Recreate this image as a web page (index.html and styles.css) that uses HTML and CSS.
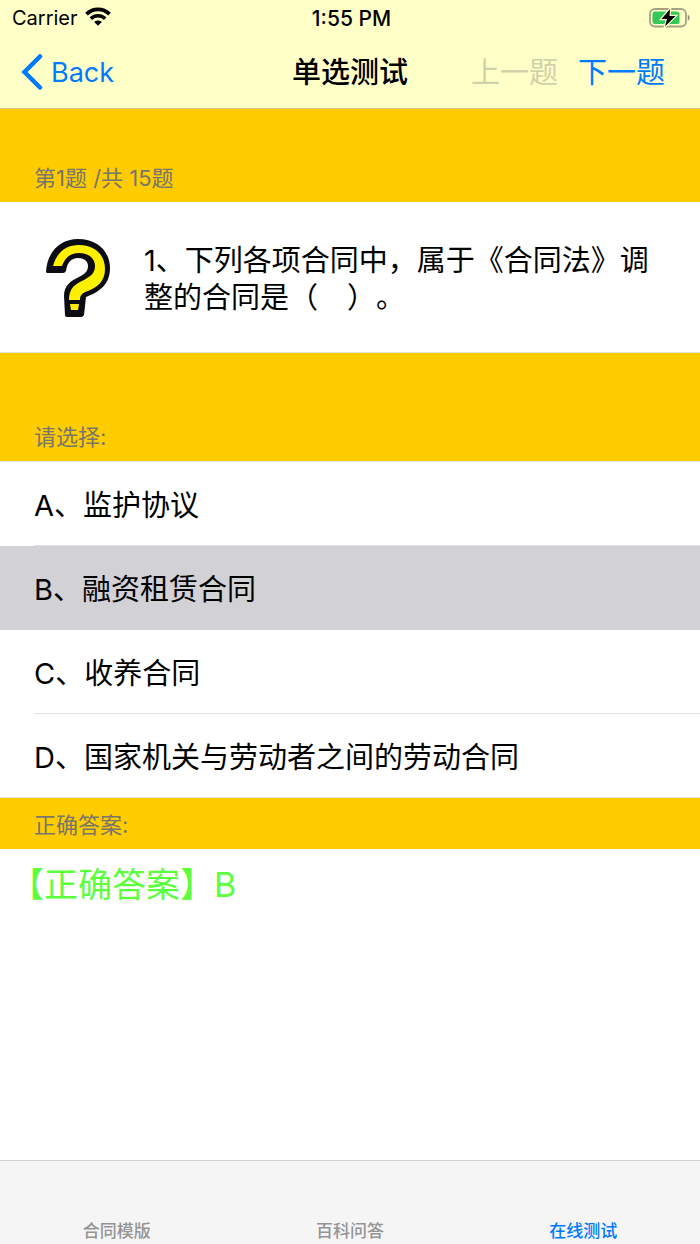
FILE: index.html
```
<!DOCTYPE html>
<html lang="zh-CN">
<head>
    <meta charset="UTF-8">
    <meta name="viewport" content="width=device-width, initial-scale=1">
    <title>单选测试</title>
    <link rel="stylesheet" href="styles.css">
</head>
<body>
<header class="header">
    <div class="status">
        <div class="status_left">
            <span>Carrier</span>
            <svg class="wifi" viewBox="0 0 26 19" aria-hidden="true">
                <path d="M1.500 7.200C8 .8 18 .8 24.500 7.200" fill="none" stroke="#000" stroke-width="3.800"/>
                <path d="M5.800 11.600C10 7.700 16 7.700 20.200 11.600" fill="none" stroke="#000" stroke-width="3.600"/>
                <path d="M13 18.800L9.200 15C11.400 13 14.600 13 16.800 15Z"/>
            </svg>
        </div>
        <span class="time">1:55 PM</span>
        <svg class="battery" viewBox="0 0 42 20" aria-hidden="true">
            <rect x="1" y="1" width="36" height="17.500" rx="5" fill="none" stroke="#a3a383" stroke-width="1.800"/>
            <path d="M38.800 6.700C41.200 7.700 41.200 11.800 38.800 12.800Z" fill="#8f8f73"/>
            <rect x="3.500" y="3.500" width="27" height="12.500" rx="2.500" fill="#34c759"/>
            <path d="M21 1L12.500 11H18L16 18.500L26.500 8H20.500Z" fill="#000" stroke="#ffffc8" stroke-width="2.400" paint-order="stroke"/>
        </svg>
    </div>
    <nav class="nav">
        <a class="back" href="#">
            <svg class="back_icon" viewBox="0 0 22 36" aria-hidden="true">
                <path d="M19 2.500L3.500 18L19 33.500" fill="none" stroke="#007aff" stroke-width="4.500" stroke-linecap="round"/>
            </svg>
            <span>Back</span>
        </a>
        <h1 class="title">单选测试</h1>
        <div class="nav_right">
            <button type="button" disabled>上一题</button>
            <button type="button">下一题</button>
        </div>
    </nav>
</header>

<main class="main">
    <h2 class="section section_first">第1题 /共 15题</h2>
    <div class="question">
        <svg class="question_icon" viewBox="0 0 68 80" aria-hidden="true">
            <path d="M1 34C2 14 15 1 33 1C53 1 65 14 65 30C65 47 54 54 41 59L39 77Q38 79 36 79H22Q20 79 20 77L19 58C19 47 26 43 34 39C40 36 43 33 43 28C43 23 39 20 33 20C26 20 22 25 21 33Q20 35 18 35H3Q1 35 1 34Z" fill="#0c0c14"/>
            <path d="M8 28C12 14 21 7 34 7C50 7 60 17 60 31C60 44 52 49 43 53C37 55 35 57 35 62H24C24 50 30 46 39 42C46 38 50 35 50 28C50 20 43 15 34 15C25 15 20 20 17 28Z" fill="#fff000"/>
            <path d="M25 66H34L33 72H26Z" fill="#ffe800"/>
        </svg>
        <p class="question_text">1、下列各项合同中，属于《合同法》调整的合同是（　）。</p>
    </div>

    <h2 class="section section_choose" id="choose">请选择:</h2>
    <div class="options" role="radiogroup" aria-labelledby="choose">
        <label class="option"><input type="radio" name="answer" value="A"><span>A、监护协议</span></label>
        <label class="option"><input type="radio" name="answer" value="B" checked><span>B、融资租赁合同</span></label>
        <label class="option"><input type="radio" name="answer" value="C"><span>C、收养合同</span></label>
        <label class="option"><input type="radio" name="answer" value="D"><span>D、国家机关与劳动者之间的劳动合同</span></label>
    </div>

    <h2 class="section">正确答案:</h2>
    <p class="answer">【正确答案】B</p>
</main>

<nav class="tabs">
    <a href="#">合同模版</a>
    <a href="#">百科问答</a>
    <a class="active" href="#">在线测试</a>
</nav>
</body>
</html>
```

FILE: styles.css
```
* {
    margin: 0;
    padding: 0;
    box-sizing: border-box;
}

body {
    display: flex;
    flex-direction: column;
    min-height: 100vh;
    font-family: Inter, "Noto Sans CJK SC", sans-serif;
    font-size: 29px;
    line-height: 37px;
    color: #000;
    background-color: #fff;
    text-spacing-trim: space-all;
}

a {
    text-decoration: none;
}

/* 顶部 */
.header {
    background-color: #ffffc8;
    border-bottom: 1px solid #d0c68a;
}

.status {
    display: grid;
    grid-template-columns: 1fr auto 1fr;
    align-items: center;
    height: 36px;
    padding: 0 9px 0 12px;
    font-size: 20px;
}

.status_left {
    display: flex;
    align-items: center;
    gap: 7px;
}

.wifi {
    width: 26px;
    height: 19px;
    margin-bottom: 4px;
}

.time {
    font-size: 21px;
    font-weight: 500;
}

.battery {
    justify-self: end;
    width: 42px;
    height: 20px;
    margin-bottom: 2px;
}

.nav {
    display: grid;
    grid-template-columns: 1fr auto 1fr;
    align-items: center;
    height: 72px;
    padding: 0 21px;
}

.back {
    display: flex;
    align-items: center;
    gap: 8px;
    font-size: 27px;
    color: #007aff;
}

.back_icon {
    width: 22px;
    height: 36px;
}

.title {
    font-size: 29px;
    font-weight: 500;
}

.nav_right {
    display: flex;
    justify-content: flex-end;
    gap: 20px;
    padding-right: 14px;
}

.nav_right button {
    border: none;
    background: none;
    font: inherit;
    color: #007aff;
    cursor: pointer;
}

.nav_right button:disabled {
    color: #d2d2aa;
    cursor: default;
}

/* 内容 */
.main {
    flex: 1;
}

.section {
    padding: 12px 34px 8px;
    font-size: 22px;
    font-weight: 400;
    line-height: 31px;
    color: #77756e;
    background-color: #fc0;
}

.section_first {
    padding-top: 54px;
}

.section_choose {
    padding-top: 69px;
}

.question {
    display: flex;
    align-items: center;
    gap: 31px;
    min-height: 151px;
    padding: 36px 34px 34px 45px;
    border-bottom: 1px solid #e2e2e4;
}

.question_icon {
    flex: none;
    width: 68px;
    height: 80px;
}

.question_text {
    padding-top: 2px;
}

.options {
    border: solid #e2e2e4;
    border-width: 1px 0;
}

.option {
    display: flex;
    padding-left: 34px;
    cursor: pointer;
}

.option input {
    appearance: none;
    width: 0;
    height: 0;
}

.option span {
    flex: 1;
    padding: 25px 0 21px;
    border-bottom: 1px solid #e2e2e4;
}

.option:last-child span {
    border-bottom: none;
}

.option:has(input:checked) {
    background-color: #d1d1d6;
}

.option:has(input:checked) span {
    border-color: transparent;
}

.answer {
    padding: 12px 10px;
    font-size: 34px;
    line-height: 48px;
    color: #5cff3c;
}

/* 底部 */
.tabs {
    display: grid;
    grid-template-columns: repeat(3, 1fr);
    align-items: end;
    height: 84px;
    border-top: 1px solid #cfd2d0;
    background-color: #f5f5f5;
    font-size: 17px;
    font-weight: 500;
    line-height: 26px;
    text-align: center;
}

.tabs a {
    color: #949494;
}

.tabs .active {
    color: #007aff;
}
```
